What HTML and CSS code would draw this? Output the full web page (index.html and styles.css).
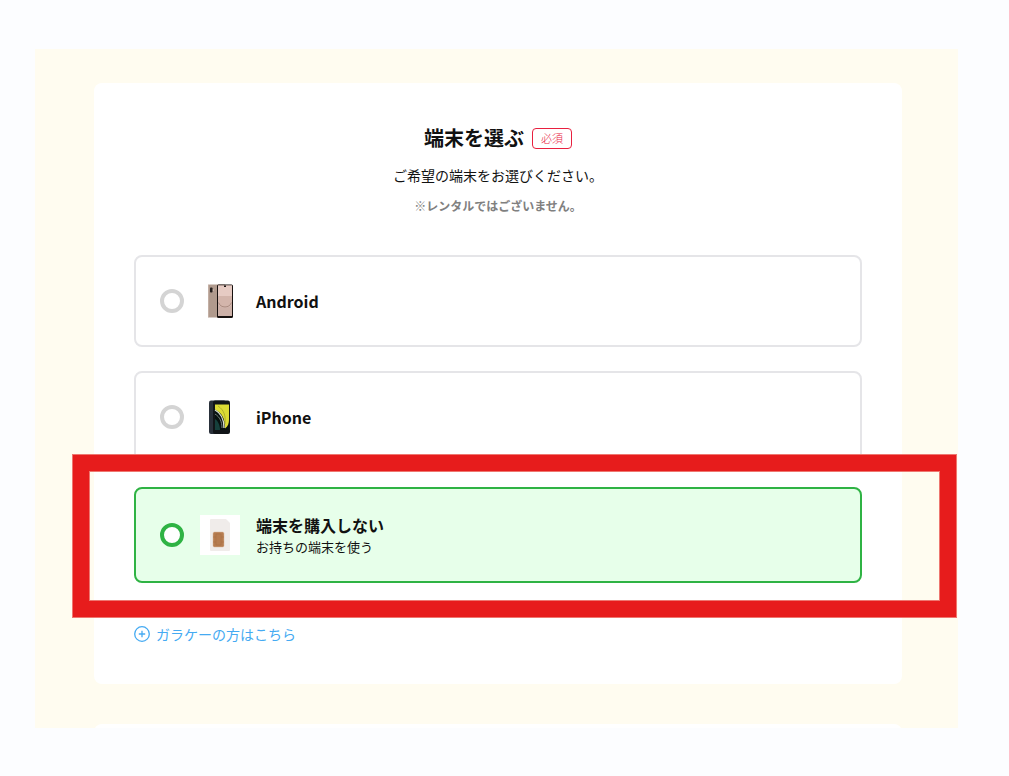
FILE: index.html
```html
<!DOCTYPE html>
<html lang="ja">
<head>
	<meta charset="UTF-8">
	<meta name="viewport" content="width=device-width, initial-scale=1">
	<title>端末を選ぶ</title>
	<link rel="stylesheet" href="styles.css">
</head>
<body>
	<main class="stage">
		<form class="card">
			<div class="head">
				<div class="title">
					<h1>端末を選ぶ</h1>
					<span class="badge">必須</span>
				</div>
				<p class="lead">ご希望の端末をお選びください。</p>
				<p class="note">※レンタルではございません。</p>
			</div>
			<div class="options">
				<label class="option">
					<input type="radio" name="device" value="android">
					<svg class="pic" viewBox="0 0 40 40" aria-hidden="true">
						<rect x="8" y="3.5" width="18" height="33" rx="1.5" fill="#b09a8d"/>
						<rect x="8" y="3.5" width="1" height="33" fill="#c3afa4"/>
						<rect x="10" y="6.5" width="2.5" height="5" rx=".8" fill="#26201f"/>
						<circle cx="13.3" cy="9" r=".5" fill="#eee1da"/>
						<rect x="17" y="3.5" width="16" height="33.5" rx="1.5" fill="#17110f"/>
						<rect x="18" y="4.5" width="14" height="30.5" fill="#cdb1a8"/>
						<path d="M18 4.500h14v15c0 5-3 7-7 7s-7-2-7-7z" fill="#e6cbc3"/>
						<path d="M18 15h14v4c0 5-3 7.500-7 7.500s-7-2.500-7-7.500z" fill="#d3b5ab"/>
						<path d="M18.500 21.500c2 6 11 6 13 0" fill="none" stroke="#9d7f74" stroke-width=".8"/>
						<rect x="24" y="4.5" width="2" height="1.500" fill="#17110f"/>
					</svg>
					<span class="name">Android</span>
				</label>
				<label class="option">
					<input type="radio" name="device" value="iphone">
					<svg class="pic" viewBox="0 0 40 40" aria-hidden="true">
						<rect x="9" y="3.5" width="17" height="33.5" rx="2" fill="#29303a"/>
						<rect x="13" y="3.5" width="17" height="33.5" rx="2" fill="#111518"/>
						<rect x="15" y="7.5" width="14" height="25.500" fill="#07100f"/>
						<path d="M15 7.500h14v15c0 4-1 7-4 9 0-11-3-15-10-19z" fill="#dcdc34"/>
						<path d="M18 9c6 4 8 10 7 18" fill="none" stroke="#a3a52b" stroke-width=".8"/>
						<path d="M15 13c6 3 9 9 9 18" fill="none" stroke="#d9dfd0" stroke-width="1.3"/>
						<path d="M15 17c5 3 7 8 7 14" fill="none" stroke="#75837c"/>
						<path d="M15 22c3 2 5 6 5 11h-5z" fill="#16403c"/>
					</svg>
					<span class="name">iPhone</span>
				</label>
				<label class="option selected">
					<input type="radio" name="device" value="none" checked>
					<svg class="pic" viewBox="0 0 40 40" aria-hidden="true">
						<rect width="40" height="40" fill="#fff"/>
						<path d="M11 4h15l4 4v27a1 1 0 0 1-1 1H11a1 1 0 0 1-1-1V5a1 1 0 0 1 1-1z" fill="#f0ecea"/>
						<rect x="13" y="17" width="11" height="15" rx="1.5" fill="#b67c50" stroke="#d8b89f" stroke-width=".5"/>
						<path d="M13 22h3v5h-3M24 22h-3v5h3M16 22v-3h5v3M16 27v3h5v-3" fill="none" stroke="#a56d43" stroke-width=".5"/>
					</svg>
					<span>
						<span class="name">端末を購入しない</span>
						<span class="sub">お持ちの端末を使う</span>
					</span>
					<span class="highlight"></span>
				</label>
			</div>
			<a class="more" href="#">
				<svg viewBox="0 0 16 16" aria-hidden="true">
					<circle cx="8" cy="8" r="7.3"/>
					<path d="M8 4.8v6.4M4.8 8h6.4"/>
				</svg>
				ガラケーの方はこちら
			</a>
		</form>
		<div class="next-wrap">
			<div class="card"></div>
		</div>
	</main>
</body>
</html>
```

FILE: styles.css
```css
* {
	box-sizing: border-box;
	margin: 0;
	padding: 0;
}
body {
	background: #fcfdff;
	color: #111;
	font-family: "Noto Sans CJK JP", "Noto Sans", sans-serif;
	font-size: 14px;
	line-height: 20px;
}
.stage {
	margin: 49px 51px 48px 35px;
	padding: 34px 56px 0 59px;
	background: #fffcf0;
}
.card {
	padding: 40px;
	background: #fff;
	border-radius: 8px;
}
.head {
	text-align: center;
}
.title {
	display: flex;
	justify-content: center;
	align-items: center;
	gap: 8px;
}
.title h1 {
	font-size: 20px;
	line-height: 30px;
}
.badge {
	padding: 0 8px;
	border: 1px solid #e8203f;
	border-radius: 4px;
	color: #e8203f;
	font-size: 11px;
	font-weight: 300;
	line-height: 19px;
}
.lead {
	margin-top: 12px;
}
.note {
	margin-top: 12px;
	color: #808080;
	font-size: 12px;
	font-weight: 700;
	line-height: 18px;
}
.options {
	display: flex;
	flex-direction: column;
	gap: 24px;
	margin-top: 40px;
}
.option {
	position: relative;
	display: flex;
	align-items: center;
	gap: 16px;
	padding: 24px;
	border: 2px solid #e5e5e8;
	border-radius: 8px;
	cursor: pointer;
}
.option input {
	appearance: none;
	flex: none;
	width: 24px;
	height: 24px;
	border: 4px solid #d4d4d4;
	border-radius: 50%;
	background: #fff;
}
.option.selected {
	border-color: #2fb344;
	background: #e7ffea;
}
.option.selected input {
	border-color: #2fb344;
}
.pic {
	flex: none;
	width: 40px;
	height: 40px;
}
.name {
	display: block;
	font-size: 16px;
	font-weight: 700;
	line-height: 24px;
}
.sub {
	display: block;
	font-size: 13px;
}
/* red frame round the chosen option, lies over its neighbours */
.highlight {
	position: absolute;
	top: -34px;
	right: -96px;
	bottom: -36px;
	left: -63px;
	border: 16px solid #e71c1c;
	box-shadow: 0 0 0 1px #ee7770, inset 0 0 0 1px #ee7770;
	pointer-events: none;
}
.more {
	display: flex;
	align-items: center;
	gap: 6px;
	width: fit-content;
	margin-top: 41px;
	color: #45aaf2;
	text-decoration: none;
}
.more svg {
	width: 16px;
	height: 16px;
	fill: none;
	stroke: currentColor;
	stroke-width: 1.3;
}
/* only the top edge of the following card shows */
.next-wrap {
	height: 4px;
	margin-top: 40px;
	overflow: hidden;
}
```
